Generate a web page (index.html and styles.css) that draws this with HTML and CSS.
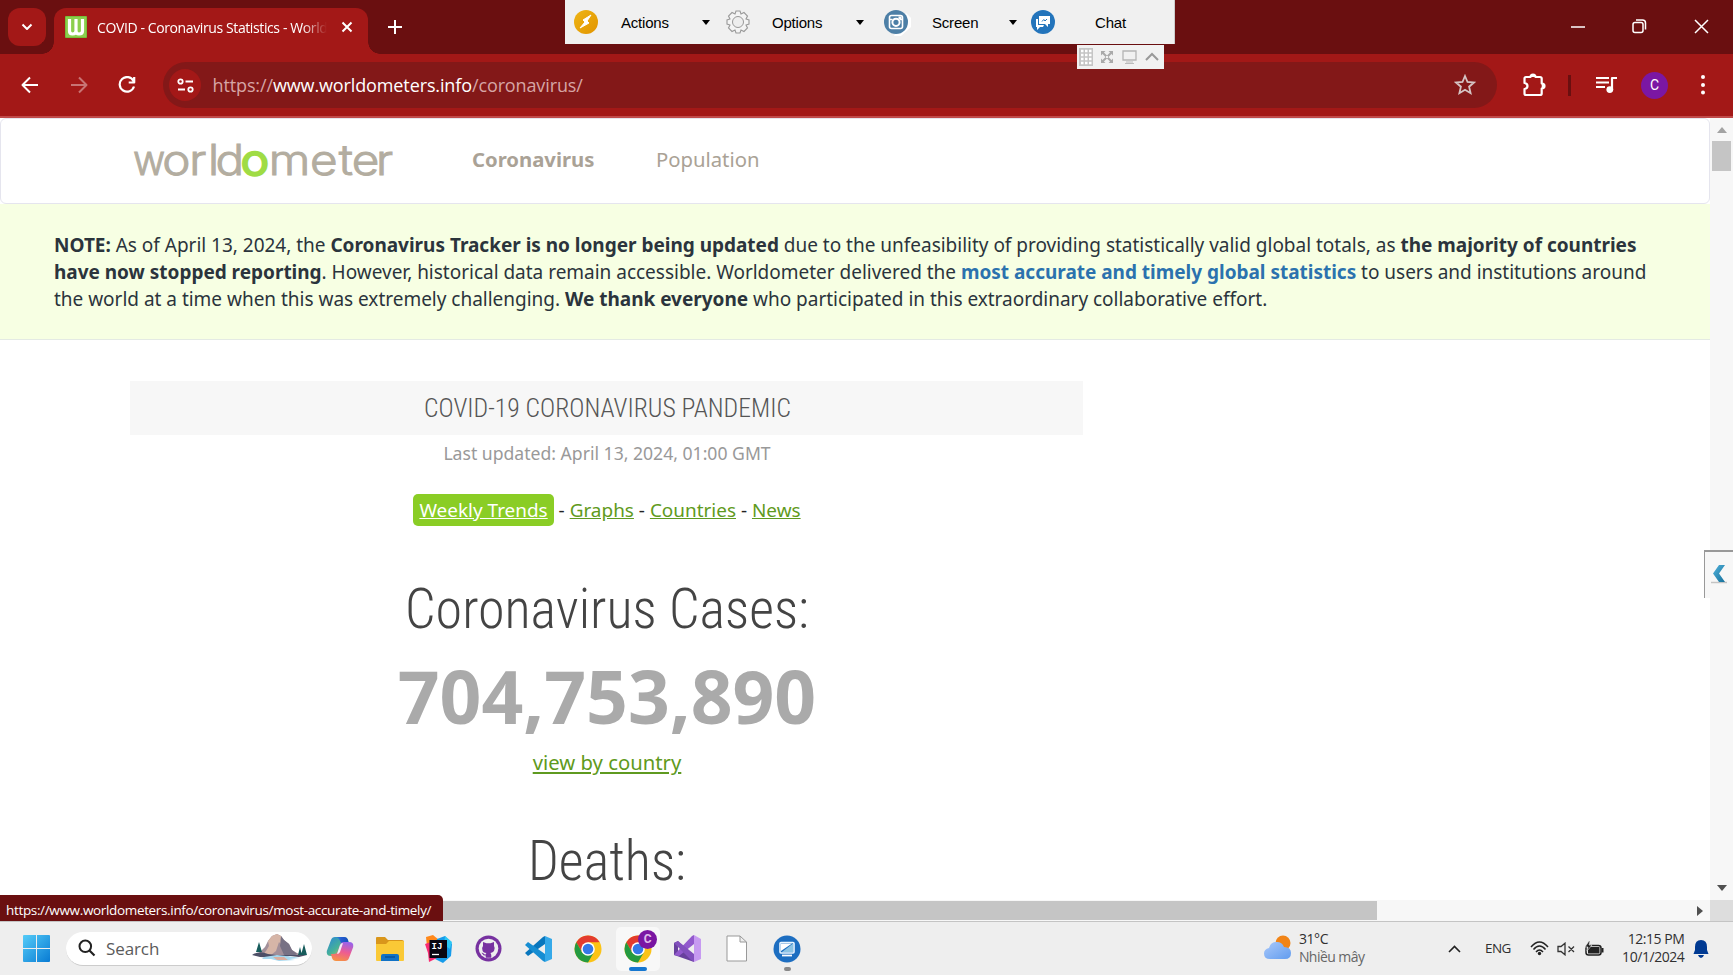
FILE: index.html
```html
<!DOCTYPE html>
<html lang="en">
<head>
<meta charset="utf-8">
<title>COVID - Coronavirus Statistics - Worldometer</title>
<link rel="stylesheet" href="styles.css">
</head>
<body>
<svg width="0" height="0" class="defs">
  <defs>
    <symbol id="chrome" viewBox="0 0 28 28">
      <circle cx="14" cy="14" r="13.5" fill="#fbc316"/>
      <path d="M2.3 7.3A13.5 13.5 0 0 1 25.7 7.3H14L8.2 17.4Z" fill="#e33b2e"/>
      <path d="M2.3 7.3A13.5 13.5 0 0 0 14 27.5L19.8 17.4L8.2 17.4Z" fill="#249a41"/>
      <path d="M14 27.5L19.8 17.4L19.8 10.6H14L25.7 7.3Z" fill="#fbc316"/>
      <circle cx="14" cy="14" r="6.8" fill="#fff"/>
      <circle cx="14" cy="14" r="5.3" fill="#3478e8"/>
    </symbol>
    <linearGradient id="win" x2="1" y2="1"><stop stop-color="#55ccf8"/><stop offset="1" stop-color="#087bd3"/></linearGradient>
    <linearGradient id="cop1" x2="1"><stop stop-color="#2f9fd8"/><stop offset=".5" stop-color="#235bd0"/><stop offset="1" stop-color="#174cba"/></linearGradient>
    <linearGradient id="cop2" x1=".6" x2=".3" y2="1"><stop stop-color="#9b62e8"/><stop offset=".5" stop-color="#ee5c91"/><stop offset="1" stop-color="#f69243"/></linearGradient>
    <linearGradient id="cop3" y2="1"><stop stop-color="#2a86d8"/><stop offset=".5" stop-color="#45b09a"/><stop offset="1" stop-color="#e6cd38"/></linearGradient>
    <linearGradient id="cloud" y2="1"><stop stop-color="#aac9fa"/><stop offset="1" stop-color="#619cef"/></linearGradient>
    <linearGradient id="gold" y2="1"><stop stop-color="#eeb515"/><stop offset="1" stop-color="#e29400"/></linearGradient>
    <linearGradient id="teal" y2="1"><stop stop-color="#52b3dc"/><stop offset="1" stop-color="#16709b"/></linearGradient>
  </defs>
</svg>

<header class="tabstrip">
  <div class="tab-search"><svg width="12" height="8" viewBox="0 0 12 8"><path d="M1.5 1.5L6 6L10.500 1.500" class="stroke w2"/></svg></div>
  <div class="tab">
    <div class="favicon"><svg width="22" height="22" viewBox="0 0 22 22"><rect width="22" height="22" rx="1" fill="#78bd39"/><rect x="1" y="1" width="20" height="20" fill="#8bcf4d"/><path d="M4.500 3V15Q4.500 18 7.500 18Q11 18 11 15V3M11 15Q11 18 14 18Q17.500 18 17.500 15V3" fill="none" stroke="#fff" stroke-width="3.200"/></svg></div>
    <span class="tab-title">COVID - Coronavirus Statistics - World</span>
    <svg class="tab-close" width="12" height="12" viewBox="0 0 12 12"><path d="M1.500 1.500L10.500 10.500M10.500 1.500L1.500 10.500" class="stroke w2"/></svg>
  </div>
  <svg class="new-tab" width="16" height="16" viewBox="0 0 16 16"><path d="M8 1V15M1 8H15" class="stroke w2"/></svg>
  <div class="window-buttons">
    <svg width="14" height="14" viewBox="0 0 14 14"><path d="M0 7H14" class="stroke w15"/></svg>
    <svg width="15" height="15" viewBox="0 0 15 15"><rect x="1" y="3.500" width="10" height="10" rx="2" class="stroke w15"/><path d="M4 1H10.500Q13.500 1 13.500 4V10.500" class="stroke w15"/></svg>
    <svg width="15" height="15" viewBox="0 0 15 15"><path d="M1 1L14 14M14 1L1 14" class="stroke w15"/></svg>
  </div>
</header>

<nav class="toolbar">
  <svg class="nav-icon" width="18" height="18" viewBox="0 0 18 18"><path d="M17 9H2M9 1.500L1.500 9L9 16.500" class="stroke w2"/></svg>
  <svg class="nav-icon dim" width="18" height="18" viewBox="0 0 18 18"><path d="M1 9H16M9 1.500L16.500 9L9 16.500" class="stroke w2"/></svg>
  <svg class="nav-icon" width="18" height="18" viewBox="0 0 18 18"><path d="M15.500 5A7.300 7.300 0 1 0 16 10.500M16.200 1V6.500H10.700" class="stroke w22"/></svg>
  <div class="omnibox">
    <div class="site-info"><svg width="17" height="15" viewBox="0 0 17 15"><circle cx="3.500" cy="3.500" r="2.200" class="stroke w18"/><path d="M8.500 3.500H16M1 11.500H8" class="stroke w18"/><circle cx="13.500" cy="11.500" r="2.200" class="stroke w18"/></svg></div>
    <span class="url">https://<b>www.worldometers.info</b>/coronavirus/</span>
    <svg class="star" width="22" height="22" viewBox="0 0 22 22"><path d="M11 2L13.500 8L20 8.500L15.100 12.700L16.600 19.200L11 15.800L5.400 19.200L6.900 12.700L2 8.500L8.500 8Z"/></svg>
  </div>
  <div class="toolbar-right">
    <svg class="puzzle" width="24" height="24" viewBox="0 0 24 24"><path d="M2.500 5.500Q2.500 4 4 4H8.500Q8.600 1.500 11 1.500Q13.400 1.500 13.500 4H18Q19.700 4 19.700 5.500V10.500Q22.500 10.700 22.500 13Q22.500 15.300 19.700 15.500V20.500Q19.700 22 18 22H4Q2.500 22 2.500 20.500V16Q5.500 15.500 5.500 13Q5.500 10.500 2.500 10Z" class="stroke w22"/><path d="M8.500 4Q8.600 1 11 1Q13.400 1 13.500 4ZM19.700 10.500Q23 10.700 23 13Q23 15.300 19.700 15.500Z" fill="#fff"/></svg>
    <i class="divider"></i>
    <svg class="music" width="22" height="18" viewBox="0 0 22 18"><path d="M0 2H13M0 6.500H13M0 11H9M16 14V2H21" class="stroke w22"/><circle cx="13.800" cy="13.600" r="3.400" fill="#fff"/></svg>
    <div class="avatar">C</div>
    <svg class="dots" width="4" height="20" viewBox="0 0 4 20"><g fill="#fff"><circle cx="2" cy="2" r="2"/><circle cx="2" cy="10" r="2"/><circle cx="2" cy="17.500" r="2"/></g></svg>
  </div>
</nav>

<div class="viewport">
  <main class="page">
    <header class="site-header">
      <svg class="logo" width="266" height="60" viewBox="0 0 266 60"><text transform="scale(.93 1)" x="1" y="44">w</text><text transform="scale(1.12 1)" y="44"><tspan x="27 51.200 67.900 74.500">orld</tspan><tspan class="green" x="97.200">o</tspan><tspan x="122.100 158.900 184.600 196.200 217.900">meter</tspan></text></svg>
      <a class="menu-active">Coronavirus</a>
      <a class="menu-link">Population</a>
    </header>
    <section class="notice">
      <b>NOTE:</b> As of April 13, 2024, the <b>Coronavirus Tracker is no longer being updated</b> due to the unfeasibility of providing statistically valid global totals, as <b>the majority of countries</b><br>
      <b>have now stopped reporting</b>. However, historical data remain accessible. Worldometer delivered the <b class="blue">most accurate and timely global statistics</b> to users and institutions around<br>
      the world at a time when this was extremely challenging. <b>We thank everyone</b> who participated in this extraordinary collaborative effort.
    </section>
    <section class="content">
      <div class="banner"><svg width="370" height="54"><text x="2" y="36" textLength="367" lengthAdjust="spacingAndGlyphs">COVID-19 CORONAVIRUS PANDEMIC</text></svg></div>
      <p class="updated">Last updated: April 13, 2024, 01:00 GMT</p>
      <p class="links"><a class="pill">Weekly Trends</a> - <a>Graphs</a> - <a>Countries</a> - <a>News</a></p>
      <h1><svg width="408" height="64"><text x="2" y="54" textLength="404" lengthAdjust="spacingAndGlyphs">Coronavirus Cases:</text></svg></h1>
      <div class="number">704,753,890</div>
      <p class="by-country"><a>view by country</a></p>
      <h1 class="deaths"><svg width="160" height="64"><text x="1" y="54" textLength="158" lengthAdjust="spacingAndGlyphs">Deaths:</text></svg></h1>
    </section>
  </main>
  <aside class="vscroll">
    <svg width="10" height="6" viewBox="0 0 10 6"><path d="M0 6L5 0L10 6Z" fill="#a3a3a3"/></svg>
    <div class="vthumb"></div>
    <svg class="down" width="10" height="6" viewBox="0 0 10 6"><path d="M0 0L5 6L10 0Z" fill="#505050"/></svg>
  </aside>
</div>
<div class="hscroll"><div class="hthumb"></div><svg width="6" height="10" viewBox="0 0 6 10"><path d="M0 0L6 5L0 10Z" fill="#505050"/></svg><div class="corner"></div></div>

<footer class="taskbar">
  <svg class="start" width="27" height="27" viewBox="0 0 27 27"><path d="M1 0H13V13H0V1Q0 0 1 0ZM14 0H26Q27 0 27 1V13H14ZM0 14H13V27H1Q0 27 0 26ZM14 14H27V26Q27 27 26 27H14Z" fill="url(#win)"/></svg>
  <div class="search">
    <svg width="18" height="18" viewBox="0 0 18 18"><circle cx="7.300" cy="7.300" r="5.800" fill="none" stroke="#222" stroke-width="2"/><path d="M11.500 11.500L16.500 16.500" stroke="#222" stroke-width="2.200"/></svg>
    <span>Search</span>
    <svg class="mountain" width="56" height="30" viewBox="0 0 56 30"><path d="M4 23L9 18L13 14L16 8L20 3L25 1L29 3L32 7L37 11L40 17L45 20L52 23Z" fill="#a28f99"/><path d="M16 8L20 3L25 1L29 3L32 11L35 16L31 14L27 9L24 18L19 22L10 23L14 18L17 13Z" fill="#d6b5a7"/><path d="M29 3L32 7L37 11L40 17L45 21L43 22H32L28 13Z" fill="#777184"/><path d="M0 22Q7 17 16 21L24 22L55 22L47 24L38 23L25 25L8 24Z" fill="#4d4f67"/><path d="M12 24L25 22L42 24L48 25L37 26L43 27L27 28L19 26L10 26Z" fill="#a6d8ef"/><path d="M21 24L32 24L36 27L25 27Z" fill="#d9ad9e"/><path d="M7 9L4 19H10ZM52 11L49 22H55ZM48 14L46 22H50Z" fill="#175c5c"/></svg>
  </div>
  <div class="apps">
    <div class="app"><svg width="28" height="28" viewBox="0 0 28 28"><path d="M9 2H18Q21 2 22 5L23 9H20Q17 9 16 12L14 18Q13 21 10 21H5Q0 21 .8 16L5 5Q6 2 9 2Z" fill="url(#cop3)"/><path d="M8 2H18Q21 2 22 5L23 9H18Q15 9 14 6Q13 2 8 2Z" fill="url(#cop1)"/><path d="M19 26H10Q7 26 6 23L5 19H8Q11 19 12 16L14 10Q15 7 18 7H23Q28 7 27.200 12L23 23Q22 26 19 26Z" fill="url(#cop2)"/><path d="M14 10Q15 8 17 8L14 17Q13 19 11 19Z" fill="#f4eaf4"/></svg></div>
    <div class="app"><svg width="28" height="28" viewBox="0 0 28 28"><path d="M0 3Q0 2 1 2H9L12 5H26Q28 5 28 7V10H0Z" fill="#d9961b"/><path d="M0 9H10L13 6H27Q28 6 28 7V25Q28 26 27 26H1Q0 26 0 25Z" fill="#fac936"/><path d="M5 26V21Q5 19 7 19H21Q23 19 23 21V26Z" fill="#1172c6"/><path d="M9 22H19" stroke="#07539b" stroke-width="1.500"/></svg></div>
    <div class="app"><svg width="28" height="28" viewBox="0 0 28 28"><path d="M1 2L8 0L14 5L8 15L2 12Z" fill="#ff881b"/><path d="M12 4L20 1L27 9L26 21L18 28L10 24Z" fill="#169bea"/><path d="M20 1L27 7L25 14L19 10Z" fill="#2bc7f4"/><path d="M0 9L9 6L12 23L4 27L3 18Z" fill="#fa2a72"/><rect x="4.500" y="5" width="17.500" height="18" fill="#090611"/><text class="ij" x="6.500" y="14">IJ</text><path d="M7 19.500H14" stroke="#fff" stroke-width="1.300"/></svg></div>
    <div class="app"><svg width="27" height="27" viewBox="0 0 27 27"><circle cx="13.500" cy="13.500" r="13" fill="#7731a0"/><circle cx="13.500" cy="13.500" r="9.800" fill="#eee"/><path d="M8 7L11.500 8.300H15.500L19 7V11Q20.500 13 19 16Q17.800 17.700 15.500 18Q16.300 19 16.300 20.500V22.800H10.700V20.500Q8.500 21 7.500 19L6.500 17.800Q8 17.500 9 19Q9.500 19.700 10.700 19.400Q10.700 18.500 11.500 18Q8 17.500 7.500 15.500Q6.500 12.500 8 11Z" fill="#7731a0"/></svg></div>
    <div class="app"><svg width="28" height="28" viewBox="0 0 28 28"><path d="M20 1L27 4V24L20 27Z" fill="#35a9e9"/><path d="M20 1V9L3 21L0 18L18 2Z" fill="#0876bd"/><path d="M20 27V19L3 7L0 10L18 26Z" fill="#168dd2"/></svg></div>
    <div class="app"><svg width="28" height="28"><use href="#chrome"/></svg></div>
    <div class="app active"><svg width="28" height="28"><use href="#chrome"/></svg><span class="badge">C</span><i class="underline"></i></div>
    <div class="app"><svg width="28" height="28" viewBox="0 0 28 28"><path d="M0 8L4 6L16 19L20 27L3 21L0 20Z" fill="#68409d"/><path d="M4 11V17L9 14Z" fill="#eee"/><path d="M20 0L27 4V24L20 27Z" fill="#c79af1"/><path d="M20 0V9L5 21L0 20L18 1Z" fill="#9259cd"/><path d="M20 27V19L4 6L0 8L17 25Z" fill="#8250bd"/></svg></div>
    <div class="app"><svg width="22" height="27" viewBox="0 0 22 27"><path d="M1 1H14L20.500 7V26H1ZM14 1V7H20.500" fill="#fff" stroke="#999"/></svg></div>
    <div class="app"><svg width="28" height="28" viewBox="0 0 28 28"><circle cx="14" cy="14" r="13.500" fill="#1d6ec1"/><rect x="7" y="7.500" width="14" height="10.500" rx="1" fill="#1d6ec1" stroke="#eaf6ff" stroke-width="1.600"/><path d="M20 8.500V17H9Z" fill="#8cc4e4"/><path d="M8 8.500H19L8 16Z" fill="#fff"/><path d="M9 20.500H19" stroke="#fff" stroke-width="1.800"/></svg><i class="running"></i></div>
  </div>
  <div class="weather">
    <svg width="29" height="25" viewBox="0 0 29 25"><circle cx="20" cy="8" r="7.500" fill="#f18417"/><path d="M7 24Q1 24 1 18.500Q1 14 6 13Q8 6 14 7Q19 7 21 12Q28 12 28 18Q28 24 22 24Z" fill="url(#cloud)"/></svg>
    <div>31°C<br><span>Nhiều mây</span></div>
  </div>
  <div class="tray">
    <svg class="caret" width="13" height="8" viewBox="0 0 13 8"><path d="M1 7L6.500 1.500L12 7" fill="none" stroke="#222" stroke-width="1.600"/></svg>
    <span class="lang">ENG</span>
    <svg width="19" height="15" viewBox="0 0 19 15"><g fill="none" stroke="#222" stroke-width="1.500"><path d="M1 6Q9.500 -4 18 6M3.500 8.500Q9.500 1.500 15.500 8.500M6 11Q9.500 7 13 11"/></g><circle cx="9.500" cy="12.500" r="1.700" fill="#222"/></svg>
    <svg class="volume" width="18" height="14" viewBox="0 0 18 14"><path d="M1 4.500H4L8 1.200V12.800L4 9.500H1ZM11.500 4.500L17 10M17 4.500L11.500 10" fill="none" stroke="#333" stroke-width="1.300"/></svg>
    <svg class="battery" width="19" height="16" viewBox="0 0 19 16"><rect x="1" y="4.500" width="15" height="9.500" rx="2.500" fill="#eee" stroke="#222" stroke-width="1.500"/><rect x="3" y="6" width="11.500" height="6.500" fill="#222"/><path d="M17.500 7V11.500" stroke="#222" stroke-width="2"/><path d="M4 0L0 6H3L2 10L7 4H4L5 0Z" fill="#222" stroke="#eee" stroke-width=".6"/></svg>
    <div class="clock">12:15 PM<br>10/1/2024</div>
    <svg class="bell" width="16" height="18" viewBox="0 0 16 18"><path d="M8 0Q14 0 14 7V10L15.500 14H.5L2 10V7Q2 0 8 0ZM5 15H11Q10 18 8 18Q6 18 5 15Z" fill="#003a92"/></svg>
  </div>
</footer>

<div class="remote-bar">
  <div class="remote-item actions"><svg width="24" height="24" viewBox="0 0 24 24"><circle cx="12" cy="12" r="12" fill="url(#gold)"/><path d="M17 5L9 10L11 12L6 18L15 13L13 11Z" fill="#fff" stroke="#fff"/></svg><span>Actions</span><i class="arrow"></i></div>
  <div class="remote-item options"><svg width="24" height="24" viewBox="0 0 24 24"><path d="M10 1H14L15 4L18 2.500L21.500 6L20 9L23 10V14L20 15L21.500 18L18 21.500L15 20L14 23H10L9 20L6 21.500L2.500 18L4 15L1 14V10L4 9L2.500 6L6 2.500L9 4Z" fill="#f4f4f4" stroke="#999" stroke-width="1.100"/><circle cx="12" cy="12" r="5.500" fill="#eee" stroke="#999"/></svg><span>Options</span><i class="arrow"></i></div>
  <div class="remote-item screen"><svg width="28" height="32" viewBox="0 0 28 32"><path d="M22 7L27 12V21L17 30H10Z" fill="#fff"/><circle cx="12" cy="16" r="12" fill="#4d7fa6"/><rect x="5.500" y="9.500" width="13" height="13" rx="2" fill="none" stroke="#fff" stroke-width="1.600"/><path d="M6 13.500H8.500M15.500 13.500H18" stroke="#fff" stroke-width="1.400"/><circle cx="12" cy="16.300" r="3.600" fill="none" stroke="#fff" stroke-width="2"/><rect x="14.500" y="10.500" width="3" height="2.500" fill="#fff"/></svg><span>Screen</span><i class="arrow"></i></div>
  <div class="remote-item chat"><svg width="24" height="24" viewBox="0 0 24 24"><circle cx="12" cy="12" r="12" fill="#2374bb"/><path d="M8 6H19V14H17V17L14 14H8Z" fill="#fff"/><path d="M5 9H7V15H13L12 17H9L6 20V17H5Z" fill="#fff"/><path d="M11 11.500L12.800 9.500L14 11L16 9" fill="none" stroke="#2374bb" stroke-width="1"/></svg><span>Chat</span></div>
</div>
<div class="remote-tools">
  <svg width="14" height="18" viewBox="0 0 14 18"><rect width="14" height="18" fill="#c5c5c5"/><path d="M2 3H14M2 7H14M2 11H14M2 15H14" stroke="#fff" stroke-width="2.500" stroke-dasharray="2.500 1.500"/></svg>
  <svg width="12" height="12" viewBox="0 0 12 12"><path d="M1 1L11 11M11 1L1 11" stroke="#aaa" stroke-width="2"/><path d="M0 0H4.500L0 4.500ZM12 0V4.500L7.500 0ZM0 12V7.500L4.500 12ZM12 12H7.500L12 7.500Z" fill="#aaa"/><rect x="5" y="5" width="2" height="2" fill="#f1f1f1"/></svg>
  <svg width="15" height="14" viewBox="0 0 15 14"><path d="M1 1H14V10H1Z" fill="none" stroke="#b5b5b5" stroke-width="1.300"/><path d="M4 12H11M3 13.500H12" stroke="#bbb"/></svg>
  <svg width="14" height="9" viewBox="0 0 14 9"><path d="M1 8L7 2L13 8" fill="none" stroke="#999" stroke-width="2"/></svg>
</div>
<div class="side-handle"><svg width="18" height="20" viewBox="0 0 18 20"><path d="M1 18.500H17" stroke="#c4c4c4" stroke-width="1.500"/><path d="M9 1H15L9 9.500L15 18H9L3 9.500Z" fill="url(#teal)"/></svg></div>
<div class="status">https://www.worldometers.info/coronavirus/most-accurate-and-timely/</div>
</body>
</html>
```

FILE: styles.css
```css
* { box-sizing: border-box; }
html, body { margin: 0; overflow: hidden; }
body { width: 1733px; height: 975px; display: flex; flex-direction: column; background: #fff; font-family: "Noto Sans", sans-serif; color: #222; position: relative; }
svg { display: block; flex: none; }
p, h1 { margin: 0; font-weight: 400; }
.defs { position: absolute; }
.stroke { fill: none; stroke: #fff; stroke-linejoin: round; }
.w15 { stroke-width: 1.5; }
.w18 { stroke-width: 1.8; }
.w2 { stroke-width: 2; }
.w22 { stroke-width: 2.2; }

.tabstrip { height: 54px; flex: none; background: #6a0f10; display: flex; align-items: center; padding-left: 8px; }
.tab-search { width: 38px; height: 38px; border-radius: 12px; background: #a31817; display: flex; align-items: center; justify-content: center; }
.tab { position: relative; width: 314px; height: 46px; margin: 8px 0 0 8px; padding: 0 15.500px 8px 11px; border-radius: 12px 12px 0 0; background: #a31817; display: flex; align-items: center; }
.tab::before, .tab::after { content: ""; position: absolute; bottom: 0; width: 12px; height: 12px; }
.tab::before { left: -12px; background: radial-gradient(circle at 0 0, #6a0f10 11.500px, #a31817 12px); }
.tab::after { right: -12px; background: radial-gradient(circle at 100% 0, #6a0f10 11.500px, #a31817 12px); }
.tab-title { width: 236px; margin-left: 10px; white-space: nowrap; font: 14px "Open Sans", sans-serif; letter-spacing: -.39px; color: #fff; -webkit-mask-image: linear-gradient(90deg, #000 205px, transparent 230px); mask-image: linear-gradient(90deg, #000 205px, transparent 230px); }
.tab-close { margin-left: auto; }
.new-tab { margin-left: 19px; }
.window-buttons { margin-left: auto; display: flex; align-items: center; gap: 47px; padding: 0 24px 1px 0; }

.toolbar { height: 64px; flex: none; display: flex; align-items: center; padding-left: 21px; background: #a31817; border-bottom: 2px solid #c04a4a; }
.nav-icon { margin-right: 31px; }
.nav-icon.dim { opacity: .4; margin-right: 30px; margin-left: -.500px; }
.omnibox { width: 1334px; height: 46px; margin-left: -3.500px; border-radius: 23px; background: #831818; display: flex; align-items: center; padding: 0 21px 0 6px; }
.site-info { width: 32px; height: 32px; border-radius: 50%; background: #a31817; display: flex; align-items: center; justify-content: center; }
.url { margin-left: 11.500px; font: 18px "Open Sans", sans-serif; letter-spacing: -.12px; color: #d6a5a5; white-space: nowrap; }
.url b { font-weight: 400; color: #fff; }
.star { margin-left: auto; fill: none; stroke: #d5c4c4; stroke-width: 1.8; }
.toolbar-right { display: flex; align-items: center; }
.puzzle { margin-left: 25px; }
.divider { width: 3px; height: 21px; margin-left: 22px; background: #6a0f10; }
.music { margin-left: 25px; }
.avatar { width: 27px; height: 27px; margin-left: 23px; border-radius: 50%; background: #7b17a3; color: #fff; font: 14px/27px Roboto, sans-serif; text-align: center; }
.dots { margin-left: 33px; }

.viewport { height: 782px; flex: none; display: flex; overflow: hidden; }
.page { width: 1710px; overflow: hidden; }
.site-header { height: 86px; border: 1px solid #e5e5ee; border-radius: 6px; display: flex; align-items: center; padding-left: 131px; font-size: 20.300px; color: #aaa296; }
.logo { overflow: visible; }
.logo text { font: 300 42.500px Inter, sans-serif; fill: #b3ada0; stroke: #b3ada0; stroke-width: 1; }
.logo .green { fill: #9fdc45; stroke: #9fdc45; stroke-width: 2.500; }
.menu-active { margin: 0 0 4px 74px; font-weight: 700; }
.menu-link { margin: 0 0 4px 61.500px; }
.notice { height: 136px; background: #f7ffe3; border-bottom: 1px solid #e4eae4; padding: 28px 0 0 54px; font-size: 19px; letter-spacing: -.015px; line-height: 27px; color: #2b343c; white-space: nowrap; }
.blue { color: #2b72ae; }
.content { width: 953px; margin: 41px 0 0 130px; text-align: center; }
.banner { height: 54px; background: #f7f7f7; display: flex; justify-content: center; }
.content svg { overflow: visible; }
.banner text { font: 300 26px Roboto, sans-serif; font-stretch: 75%; fill: #555; }
.updated, .links, .number, .by-country, h1 { padding-left: 1px; }
.updated { margin-top: 6px; font-size: 17.600px; line-height: 25px; color: #999; }
.links { margin-top: 26px; font-size: 18.950px; line-height: 36px; }
.links a, .by-country a { color: #5f9a20; text-decoration: underline; }
.links .pill { display: inline-block; line-height: 32px; padding: 0 6px; border-radius: 5px; background: #8acd25; color: #fff; }
h1 { display: flex; justify-content: center; }
h1 svg { margin-top: 46px; }
h1 text { font: 300 55px Roboto, sans-serif; font-stretch: 75%; fill: #444; }
.number { font-size: 73.200px; font-weight: 700; line-height: 84px; margin-top: 16px; color: #aaa; }
.by-country { font-size: 20.300px; line-height: 28px; margin-top: 10px; }
.deaths svg { margin-top: 50px; }
.vscroll { width: 23px; background: #f7f7f7; display: flex; flex-direction: column; align-items: center; padding-top: 9px; }
.vthumb { width: 19px; height: 30px; margin-top: 8px; background: #c5c5c5; }
.down { margin: auto 0 9px; }
.hscroll { height: 21px; flex: none; background: #f7f7f7; display: flex; align-items: center; }
.hthumb { width: 1377px; height: 19px; background: #c5c5c5; margin-right: 320px; }
.corner { width: 23px; height: 21px; margin-left: auto; background: #ddd; }

.taskbar { height: 54px; flex: none; border-top: 1px solid #c4c4c4; background: #eee; display: flex; align-items: center; font: 14px "Open Sans", sans-serif; color: #303030; }
.start { margin-left: 23px; }
.search { width: 246px; height: 34px; margin-left: 16px; border-radius: 17px; background: #fff; border-bottom: 1px solid #ccc; display: flex; align-items: center; padding: 0 4px 0 12px; font-size: 17px; letter-spacing: -.1px; color: #5b5b5b; }
.search span { margin-left: 10px; }
.mountain { margin-left: auto; }
.apps { display: flex; margin-left: 3px; }
.app { position: relative; width: 49.700px; height: 44px; display: flex; align-items: center; justify-content: center; }
.active::before { content: ""; position: absolute; left: 3px; width: 44px; height: 44px; border-radius: 5px; background: #f8f8f8; }
.active svg { position: relative; }
.badge { position: absolute; left: 25px; top: 3px; width: 19px; height: 19px; border-radius: 50%; background: #7b17a3; color: #dfbcea; font: 700 12px/19px Roboto, sans-serif; text-align: center; }
.underline, .running { position: absolute; bottom: 0; height: 4px; border-radius: 2px; background: #1677d0; left: 16px; width: 18px; }
.running { width: 7px; left: 22px; background: #888; }
.ij { font: 700 9px "Liberation Mono", monospace; fill: #fff; }
.weather { width: 140px; margin-left: 451px; display: flex; align-items: center; gap: 7px; line-height: 18px; letter-spacing: -.4px; white-space: nowrap; padding-bottom: 2px; }
.weather span { color: #666; letter-spacing: -.55px; }
.tray { flex: 1; display: flex; align-items: center; }
.caret { margin-left: 45px; }
.lang { width: 28px; margin: 0 17px 2px 24px; font-size: 13.500px; letter-spacing: -.5px; }
.volume { margin-left: 8px; }
.battery { margin-left: 10px; }
.clock { width: 80px; margin: 0 0 2px .500px; text-align: right; line-height: 18px; white-space: nowrap; letter-spacing: -.45px; }
.bell { margin-left: 9px; }

.remote-bar { position: absolute; left: 565px; top: 0; width: 610px; height: 44px; background: #f0f0f0; display: grid; grid-template-columns: 153px 158px 145px 154px; border-right: 1px solid #ccc; font: 15px "Liberation Sans", sans-serif; color: #000; }
.remote-item { display: flex; align-items: center; padding-left: 9px; }
.remote-item span { width: 85px; margin-left: 23px; letter-spacing: -.2px; }
.options { padding-left: 8px; }
.options span { width: 88px; margin-left: 22px; }
.screen { padding-left: 8px; }
.screen span { margin-left: 20px; width: 81px; }
.chat { padding-left: 10px; }
.chat span { margin-left: 40px; }
.arrow { border: 4px solid transparent; border-top: 5px solid #000; border-bottom: 0; margin-left: -4px; }
.remote-tools { position: absolute; left: 1077px; top: 45px; width: 87px; height: 24px; background: #f1f1f1; display: flex; align-items: center; justify-content: space-between; padding: 0 5px 1px 2px; }
.side-handle { position: absolute; left: 1704px; top: 550px; width: 29px; height: 48px; background: #f7f7f7; border: solid #999; border-width: 2px 0 0 1px; padding: 12px 0 0 5px; }
.status { position: absolute; left: 0; top: 895px; width: 443px; height: 26px; padding-left: 6px; background: #6a0f10; border-radius: 0 5px 0 0; color: #fff; font: 13.500px/30px "Open Sans", sans-serif; letter-spacing: -.34px; white-space: nowrap; }
```
